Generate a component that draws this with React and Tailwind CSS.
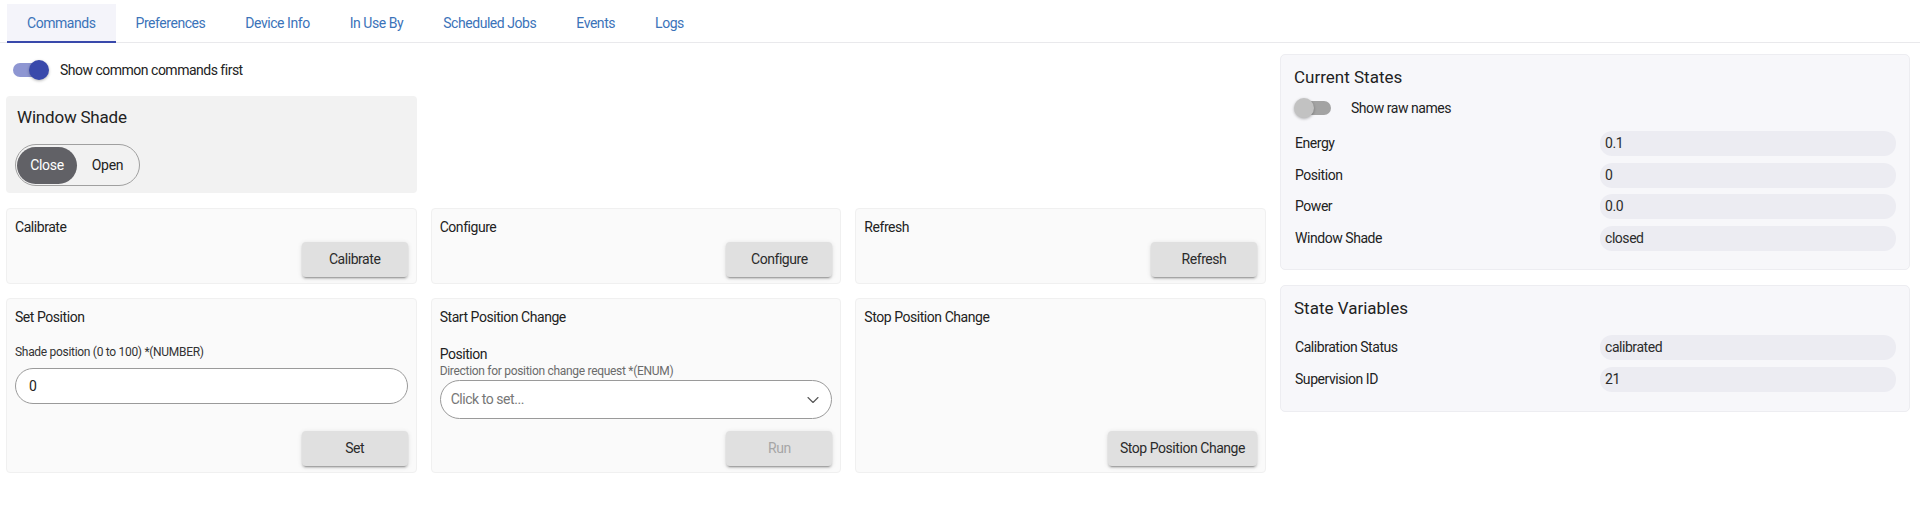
import { ChevronDown } from 'lucide-react'

const TABS = ['Commands', 'Preferences', 'Device Info', 'In Use By', 'Scheduled Jobs', 'Events', 'Logs']

const CURRENT = [
  ['Energy', '0.1'],
  ['Position', '0'],
  ['Power', '0.0'],
  ['Window Shade', 'closed'],
]

const VARIABLES = [
  ['Calibration Status', 'calibrated'],
  ['Supervision ID', '21'],
]

function Btn({ children, disabled }) {
  return (
    <button
      disabled={disabled}
      className={`h-[35px] min-w-[106px] px-3 rounded-[4px] bg-[#e0e0e0] text-[14px] tracking-[-0.45px] shadow-[0_3px_1px_-2px_rgba(0,0,0,0.2),0_2px_2px_0_rgba(0,0,0,0.14),0_1px_5px_0_rgba(0,0,0,0.12)] ${disabled ? 'text-[#a6a6a6]' : 'text-[#2b2b2b]'}`}
    >
      {children}
    </button>
  )
}

function Card({ title, children, className = '' }) {
  return (
    <div className={`flex flex-col px-[8px] pt-[8px] pb-[6px] bg-[#fafafa] border border-[#f0f0f0] rounded-[4px] ${className}`}>
      <p className="text-[14px] tracking-[-0.45px] leading-[20px] text-[#222]">{title}</p>
      {children}
    </div>
  )
}

function Switch({ on }) {
  return (
    <div className="relative w-[40px] h-[20px] flex items-center">
      <div className={`absolute left-[3px] w-[34px] h-[14px] rounded-full ${on ? 'bg-[#8e96d2]' : 'bg-[#a3a3a3]'}`} />
      <div
        className={`absolute w-[20px] h-[20px] rounded-full shadow-[0_1px_3px_rgba(0,0,0,0.3)] ${on ? 'left-[19px] bg-[#3949ab]' : 'left-0 bg-[#c2c2c2]'}`}
      />
    </div>
  )
}

function StateRow({ label, value }) {
  return (
    <div className="grid grid-cols-[306px_1fr] items-center">
      <span className="pl-[1px] text-[14px] tracking-[-0.45px] text-[#222]">{label}</span>
      <div className="h-[25px] flex items-center pl-[5px] rounded-[12px] bg-[#ececf2] text-[14px] tracking-[-0.45px] text-[#2b2b2b]">{value}</div>
    </div>
  )
}

export default function App() {
  return (
    <div className="w-[1920px] h-[519px] bg-white [font-family:Roboto,sans-serif] overflow-hidden">
      <div className="h-[43px] pt-[4px] pl-[7px] flex border-b border-[#e9e9ec]">
        {TABS.map((t, i) => (
          <div
            key={t}
            className={`h-[39px] px-[20px] flex items-center text-[14px] tracking-[-0.45px] text-[#3b73b9] ${i === 0 ? 'bg-[#f4f4fa] border-b-2 border-[#3949ab] pt-[2px]' : ''}`}
          >
            {t}
          </div>
        ))}
      </div>

      <div className="flex gap-[14px] pl-[6px] pr-[10px]">
        <div className="w-[1260px]">
          <div className="mt-[8px] h-[38px] flex items-center">
            <div className="ml-[4px]"><Switch on /></div>
            <span className="ml-[10px] text-[14px] tracking-[-0.5px] text-[#222]">Show common commands first</span>
          </div>

          <div className="mt-[7px] w-[411px] h-[97px] px-[9px] pt-[10px] bg-[#f2f2f2] rounded-[4px]">
            <p className="pl-[2px] text-[17px] tracking-[-0.2px] leading-[22px] text-[#222]">Window Shade</p>
            <div className="mt-[16px] w-[125px] h-[42px] flex items-center px-[1px] rounded-full border border-[#a0a0a0]">
              <div className="w-[60px] h-[37px] flex items-center justify-center rounded-full bg-[#616166] text-white text-[14px] tracking-[-0.3px]">Close</div>
              <div className="flex-1 text-center text-[14px] tracking-[-0.3px] text-[#222]">Open</div>
            </div>
          </div>

          <div className="mt-[15px] grid grid-cols-3 gap-[14px]">
            <Card title="Calibrate" className="h-[76px]">
              <div className="mt-auto self-end"><Btn>Calibrate</Btn></div>
            </Card>
            <Card title="Configure" className="h-[76px]">
              <div className="mt-auto self-end"><Btn>Configure</Btn></div>
            </Card>
            <Card title="Refresh" className="h-[76px]">
              <div className="mt-auto self-end"><Btn>Refresh</Btn></div>
            </Card>

            <Card title="Set Position" className="h-[175px]">
              <p className="mt-[17px] text-[12px] tracking-[-0.3px] leading-[16px] text-[#333]">Shade position (0 to 100) *(NUMBER)</p>
              <div className="mt-[8px] h-[36px] flex items-center px-[13px] rounded-full border border-[#9a9a9a] bg-white text-[14px] text-[#222]">0</div>
              <div className="mt-auto self-end"><Btn>Set</Btn></div>
            </Card>
            <Card title="Start Position Change" className="h-[175px]">
              <p className="mt-[18px] text-[14px] tracking-[-0.45px] leading-[18px] text-[#222]">Position</p>
              <p className="text-[12px] tracking-[-0.3px] leading-[16px] text-[#6b6b6b]">Direction for position change request *(ENUM)</p>
              <div className="mt-[1px] h-[39px] flex items-center justify-between pl-[10px] pr-[8px] rounded-full border border-[#9a9a9a] bg-white">
                <span className="text-[14px] tracking-[-0.45px] text-[#777]">Click to set...</span>
                <ChevronDown className="w-[20px] h-[20px] text-[#555]" strokeWidth={1.3} />
              </div>
              <div className="mt-auto self-end"><Btn disabled>Run</Btn></div>
            </Card>
            <Card title="Stop Position Change" className="h-[175px]">
              <div className="mt-auto self-end"><Btn>Stop Position Change</Btn></div>
            </Card>
          </div>
        </div>

        <div className="w-[630px] pt-[11px]">
          <div className="px-[13px] pt-[10px] pb-[18px] bg-[#f7f7fa] border border-[#ededf1] rounded-[5px]">
            <p className="text-[17px] leading-[24px] text-[#222]">Current States</p>
            <div className="mt-[7px] h-[24px] flex items-center">
              <Switch />
              <span className="ml-[17px] text-[14px] tracking-[-0.45px] text-[#222]">Show raw names</span>
            </div>
            <div className="mt-[11px] flex flex-col gap-[6.5px]">
              {CURRENT.map(([l, v]) => <StateRow key={l} label={l} value={v} />)}
            </div>
          </div>

          <div className="mt-[15px] px-[13px] pt-[10px] pb-[19px] bg-[#f7f7fa] border border-[#ededf1] rounded-[5px]">
            <p className="text-[17px] leading-[24px] text-[#222]">State Variables</p>
            <div className="mt-[15px] flex flex-col gap-[7px]">
              {VARIABLES.map(([l, v]) => <StateRow key={l} label={l} value={v} />)}
            </div>
          </div>
        </div>
      </div>
    </div>
  )
}
